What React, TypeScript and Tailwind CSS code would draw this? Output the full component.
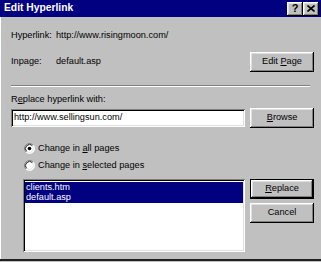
import React from "react";

const raised =
  "bg-[#c0c0c0] shadow-[inset_-1px_-1px_0_#000,inset_1px_1px_0_#fff,inset_-2px_-2px_0_#808080,inset_2px_2px_0_#dfdfdf]";
const sunken =
  "shadow-[inset_1px_1px_0_#808080,inset_-1px_-1px_0_#fff,inset_2px_2px_0_#000,inset_-2px_-2px_0_#dfdfdf]";

function Btn({ children, def }: { children: React.ReactNode; def?: boolean }) {
  if (def) {
    return (
      <div className="w-[64px] h-[20px] border border-black flex">
        <div className={`flex-1 flex items-center justify-center ${raised}`}>
          <span>{children}</span>
        </div>
      </div>
    );
  }
  return (
    <div className={`w-[64px] h-[20px] flex items-center justify-center ${raised}`}>
      <span>{children}</span>
    </div>
  );
}

function Radio({ checked }: { checked?: boolean }) {
  return (
    <svg width="11" height="11" viewBox="0 0 12 12" className="shrink-0">
      <circle cx="6" cy="6" r="5.5" fill="#fff" />
      <path d="M9.89 2.11 A5.5 5.5 0 0 0 2.11 9.89" fill="none" stroke="#808080" strokeWidth="1" />
      <path d="M9.18 2.82 A4.5 4.5 0 0 0 2.82 9.18" fill="none" stroke="#000" strokeWidth="1" />
      <path d="M9.89 2.11 A5.5 5.5 0 0 1 2.11 9.89" fill="none" stroke="#fff" strokeWidth="1" />
      <path d="M9.18 2.82 A4.5 4.5 0 0 1 2.82 9.18" fill="none" stroke="#dfdfdf" strokeWidth="1" />
      {checked && <circle cx="6" cy="6" r="2" fill="#000" />}
    </svg>
  );
}

export default function App() {
  return (
    <div className="w-[321px] h-[262px] bg-[#c0c0c0] font-[Liberation_Sans,Arial,sans-serif] text-[9.2px] text-black flex flex-col overflow-hidden leading-none">
      {/* Title bar */}
      <div className="h-[17px] bg-[#000080] flex items-center justify-between pl-[4px] pr-[2px] shrink-0">
        <span className="text-white font-bold text-[10.3px]">Edit Hyperlink</span>
        <div className="flex">
          <div className={`w-[16px] h-[14px] flex items-center justify-center ${raised}`}>
            <span className="font-bold text-[11px] leading-none">?</span>
          </div>
          <div className={`w-[16px] h-[14px] flex items-center justify-center ${raised}`}>
            <svg width="8" height="7" viewBox="0 0 8 7">
              <path d="M0.5 0.5 L7.5 6.5 M7.5 0.5 L0.5 6.5" stroke="#000" strokeWidth="1.6" />
            </svg>
          </div>
        </div>
      </div>

      {/* Body */}
      <div className="h-[242px] flex flex-col pl-[10px] pr-[7px] border-l border-l-white">
        <div className="mt-[13px] h-[12px] flex items-center">
          <span className="w-[45px] shrink-0">Hyperlink:</span>
          <span>http://www.risingmoon.com/</span>
        </div>

        <div className="mt-[10px] h-[20px] flex items-center">
          <span className="w-[45px] shrink-0">Inpage:</span>
          <span>default.asp</span>
          <div className="ml-auto">
            <Btn>
              Edit <span className="underline">P</span>age
            </Btn>
          </div>
        </div>

        <div className="mt-[13px] w-[299px] h-[2px] border-t border-t-[#808080] border-b border-b-white" />

        <div className="mt-[7px] h-[12px] flex items-center">
          <span>
            R<span className="underline">e</span>place hyperlink with:
          </span>
        </div>

        <div className="mt-[2px] h-[20px] flex items-center gap-[5px]">
          <div className={`w-[235px] h-[18px] bg-white flex items-center pl-[3px] ${sunken}`}>
            <span>http://www.sellingsun.com/</span>
          </div>
          <Btn>
            <span className="underline">B</span>rowse
          </Btn>
        </div>

        <div className="mt-[12px] flex flex-col pl-[13px]">
          <div className="h-[17px] flex items-center gap-[3px]">
            <Radio checked />
            <span>
              Change in <span className="underline">a</span>ll pages
            </span>
          </div>
          <div className="h-[17px] flex items-center gap-[3px]">
            <Radio />
            <span>
              Change in <span className="underline">s</span>elected pages
            </span>
          </div>
        </div>

        <div className="mt-[5px] flex gap-[5px]">
          <div className={`ml-[12px] w-[223px] h-[73px] bg-white p-[2px] pt-[3px] ${sunken}`}>
            <div className="bg-[#000080] text-white flex flex-col">
              <div className="h-[10.5px] flex items-center pl-[1px]">clients.htm</div>
              <div className="h-[10.5px] flex items-center pl-[1px]">default.asp</div>
            </div>
          </div>
          <div className="flex flex-col gap-[4px]">
            <Btn def>
              <span className="underline">R</span>eplace
            </Btn>
            <Btn>Cancel</Btn>
          </div>
        </div>
      </div>
      <div className="h-[2px] bg-[#202020] shrink-0" />
      <div className="h-[1px] bg-[#c0c0c0] shrink-0" />
    </div>
  );
}
